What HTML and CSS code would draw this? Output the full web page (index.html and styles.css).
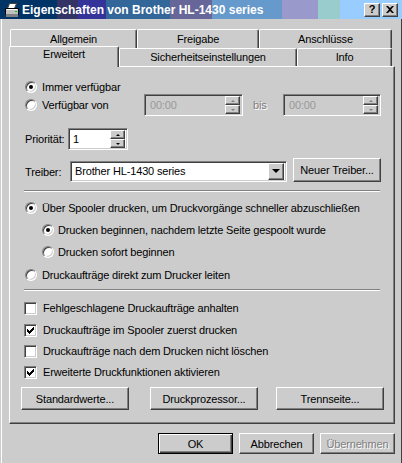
FILE: index.html
```html
<!DOCTYPE html>
<html lang="de">
<head>
    <meta charset="UTF-8">
    <title>Eigenschaften von Brother HL-1430 series</title>
    <link rel="stylesheet" href="styles.css">
</head>
<body>
    <div class="window">
        <div class="titlebar">
            <svg class="app-icon" viewBox="0 0 16 16" width="16" height="16">
                <path d="M5.5 1.5h7l-2 5h-7z" fill="#ffffff" stroke="#404040"/>
                <path d="M1.5 6.5h13v6h-13z" fill="#c0c0c0" stroke="#000000"/>
                <path d="M2 12h12v3H2z" fill="#808080"/>
                <path d="M2.5 7.5h11" stroke="#ffffff"/>
                <rect x="11" y="9" width="2" height="1" fill="#00cc00"/>
            </svg>
            <span class="title">Eigenschaften von Brother HL-1430 series</span>
            <div class="caption-btns">
                <div class="cap-btn help">?</div>
                <div class="cap-btn">
                    <svg viewBox="0 0 8 7" width="8" height="7">
                        <path d="M0 0h2l2 2 2-2h2L5 3.5 8 7H6L4 5 2 7H0l3-3.5z" fill="#000"/>
                    </svg>
                </div>
            </div>
        </div>

        <div class="client">
            <div class="tabs">
                <div class="tabrow back">
                    <div class="tab t-allgemein">Allgemein</div>
                    <div class="tab t-freigabe">Freigabe</div>
                    <div class="tab t-anschluesse">Anschlüsse</div>
                </div>
                <div class="tabrow front">
                    <div class="tab t-erweitert active">Erweitert</div>
                    <div class="tab t-sicherheit">Sicherheitseinstellungen</div>
                    <div class="tab t-info">Info</div>
                </div>
            </div>

            <div class="panel">
                <div class="row r-immer">
                    <span class="radio checked"></span>
                    <span class="label">Immer verfügbar</span>
                </div>
                <div class="row r-von">
                    <div class="von-label">
                        <span class="radio"></span>
                        <span class="label">Verfügbar von</span>
                    </div>
                    <div class="field time disabled">
                        <span class="value">00:00</span>
                        <div class="spin">
                            <div class="spin-btn"><span class="arrow up"></span></div>
                            <div class="spin-btn"><span class="arrow down"></span></div>
                        </div>
                    </div>
                    <span class="bis disabled-text">bis</span>
                    <div class="field time time2 disabled">
                        <span class="value">00:00</span>
                        <div class="spin">
                            <div class="spin-btn"><span class="arrow up"></span></div>
                            <div class="spin-btn"><span class="arrow down"></span></div>
                        </div>
                    </div>
                </div>
                <div class="row r-prio">
                    <span class="field-label prio-label">Priorität:</span>
                    <div class="field prio">
                        <span class="value">1</span>
                        <div class="spin">
                            <div class="spin-btn"><span class="arrow up"></span></div>
                            <div class="spin-btn"><span class="arrow down"></span></div>
                        </div>
                    </div>
                </div>
                <div class="row r-treiber">
                    <span class="field-label treiber-label">Treiber:</span>
                    <div class="field combo">
                        <span class="value">Brother HL-1430 series</span>
                        <div class="drop-btn"><span class="arrow down big"></span></div>
                    </div>
                    <div class="btn neu-treiber">Neuer Treiber...</div>
                </div>

                <div class="sep sep1"></div>

                <div class="row r-spool">
                    <span class="radio checked"></span>
                    <span class="label">Über Spooler drucken, um Druckvorgänge schneller abzuschließen</span>
                </div>
                <div class="row sub r-letzte">
                    <span class="radio checked"></span>
                    <span class="label">Drucken beginnen, nachdem letzte Seite gespoolt wurde</span>
                </div>
                <div class="row sub r-sofort">
                    <span class="radio"></span>
                    <span class="label">Drucken sofort beginnen</span>
                </div>
                <div class="row r-direkt">
                    <span class="radio"></span>
                    <span class="label">Druckaufträge direkt zum Drucker leiten</span>
                </div>

                <div class="sep sep2"></div>

                <div class="row check c1">
                    <span class="checkbox"></span>
                    <span class="label">Fehlgeschlagene Druckaufträge anhalten</span>
                </div>
                <div class="row check c2">
                    <span class="checkbox checked"><svg viewBox="0 0 7 7" width="7" height="7"><path d="M0 2h1v1h1v1h1V3h1V2h1V1h1V0h1v3H6v1H5v1H4v1H3v1H2V6H1V5H0z" fill="#000"/></svg></span>
                    <span class="label">Druckaufträge im Spooler zuerst drucken</span>
                </div>
                <div class="row check c3">
                    <span class="checkbox"></span>
                    <span class="label">Druckaufträge nach dem Drucken nicht löschen</span>
                </div>
                <div class="row check c4">
                    <span class="checkbox checked"><svg viewBox="0 0 7 7" width="7" height="7"><path d="M0 2h1v1h1v1h1V3h1V2h1V1h1V0h1v3H6v1H5v1H4v1H3v1H2V6H1V5H0z" fill="#000"/></svg></span>
                    <span class="label">Erweiterte Druckfunktionen aktivieren</span>
                </div>

                <div class="panel-buttons">
                    <div class="btn b-standard">Standardwerte...</div>
                    <div class="btn b-prozessor">Druckprozessor...</div>
                    <div class="btn b-trenn">Trennseite...</div>
                </div>
            </div>

            <div class="dialog-buttons">
                <div class="btn default">OK</div>
                <div class="btn">Abbrechen</div>
                <div class="btn disabled">Übernehmen</div>
            </div>
        </div>
    </div>
</body>
</html>
```

FILE: styles.css
```css
body {
    margin: 0;
    font-family: "Liberation Sans", Arial, sans-serif;
    font-size: 11px;
    letter-spacing: -0.15px;
    background-color: #cccccc;
    color: #000000;
}

.window {
    width: 402px;
    height: 463px;
    background-color: #cccccc;
    display: flex;
    flex-direction: column;
    overflow: hidden;
}

/* title bar, banded like a 256 colour gradient */
.titlebar {
    flex: none;
    height: 19px;
    display: flex;
    align-items: center;
    background: linear-gradient(to right,
        #003366 0 57px, #333366 57px 78px, #333399 78px 106px,
        #336699 106px 170px, #666699 170px 212px, #6699cc 212px 282px,
        #9999cc 282px 318px, #99cccc 318px 340px, #99ccff 340px);
}

.app-icon {
    margin-left: 4px;
    flex: none;
}

.title {
    margin-left: 2px;
    padding-top: 1px;
    color: #ffffff;
    font-weight: bold;
    font-size: 12px;
    letter-spacing: 0;
    white-space: nowrap;
}

.caption-btns {
    margin-left: auto;
    margin-right: 4px;
    display: flex;
    gap: 2px;
}

.cap-btn {
    box-sizing: border-box;
    width: 16px;
    height: 14px;
    background-color: #cccccc;
    border: 1px solid;
    border-color: #ffffff #404040 #404040 #ffffff;
    box-shadow: inset -1px -1px #808080;
    display: flex;
    align-items: center;
    justify-content: center;
}

.cap-btn.help {
    font-weight: bold;
    font-size: 11px;
    line-height: 11px;
}

.client {
    flex: 1;
    margin-left: 1px;
    border-left: 1px solid #ffffff;
    border-right: 1px solid #404040;
}

/* tabs */
.tabs {
    padding-top: 10px;
}

.tabrow {
    display: flex;
}

.tabrow.back {
    padding-left: 8px;
    height: 19px;
}

.tabrow.front {
    padding-left: 7px;
    height: 18px;
    align-items: flex-end;
}

.tab {
    box-sizing: border-box;
    background-color: #cccccc;
    border-top: 1px solid #ffffff;
    border-left: 1px solid #ffffff;
    border-right: 1px solid #404040;
    box-shadow: inset -1px 0 #808080;
    border-radius: 2px 2px 0 0;
    text-align: center;
    line-height: 13px;
    white-space: nowrap;
}

.back .tab {
    height: 19px;
    padding-top: 3px;
}

.front .tab {
    height: 18px;
    padding-top: 2px;
}

.front .tab.active {
    height: 21px;
    margin-bottom: -1px;
    padding-top: 1px;
    position: relative;
    z-index: 1;
}

.t-allgemein { width: 127px; }
.t-freigabe { width: 122px; }
.t-anschluesse { width: 133px; }
.t-erweitert { width: 110px; }
.t-sicherheit { width: 178px; }
.t-info { width: 95px; }

/* tab page */
.panel {
    box-sizing: border-box;
    margin-left: 7px;
    width: 386px;
    height: 358px;
    border: 1px solid;
    border-color: #ffffff #404040 #404040 #ffffff;
    box-shadow: inset -1px -1px #808080;
    padding: 12px 0 0 14px;
}

.row {
    display: flex;
    align-items: center;
    height: 16px;
    white-space: nowrap;
}

.r-immer { height: 15px; }
.r-von { height: 22px; }
.r-prio { height: 22px; margin-top: 12px; }
.r-treiber { height: 24px; margin-top: 8px; }
.r-spool { margin-top: 8px; }
.r-letzte { margin-top: 6px; }
.r-sofort { margin-top: 6px; }
.r-direkt { margin-top: 7px; }
.c1 { margin-top: 9px; }
.c2 { margin-top: 6px; }
.c3 { margin-top: 5px; }
.c4 { margin-top: 5px; }

.row.sub {
    padding-left: 17px;
}

.sep {
    width: 356px;
    height: 0;
    border-top: 1px solid #808080;
    border-bottom: 1px solid #ffffff;
}

.sep1 { margin-top: 8px; }
.sep2 { margin-top: 6px; }

.radio {
    position: relative;
    flex: none;
    box-sizing: border-box;
    width: 12px;
    height: 12px;
    margin-left: 1px;
    margin-right: 5px;
    border-radius: 50%;
    background-color: #ffffff;
    border: 1px solid;
    border-color: #808080 #ffffff #ffffff #808080;
    box-shadow: inset 1px 1px #404040, inset -1px -1px #cccccc;
}

.radio.checked::after {
    content: "";
    position: absolute;
    left: 3px;
    top: 3px;
    width: 4px;
    height: 4px;
    border-radius: 50%;
    background-color: #000000;
}

.row.sub .radio {
    margin-right: 4px;
}

.checkbox {
    flex: none;
    box-sizing: border-box;
    width: 13px;
    height: 13px;
    margin-right: 6px;
    background-color: #ffffff;
    border: 1px solid;
    border-color: #808080 #ffffff #ffffff #808080;
    box-shadow: inset 1px 1px #404040, inset -1px -1px #cccccc;
    display: flex;
    align-items: center;
    justify-content: center;
}

.checkbox svg {
    margin-top: 1px;
}

.von-label {
    width: 120px;
    display: flex;
    align-items: center;
}

.field {
    position: relative;
    box-sizing: border-box;
    height: 22px;
    background-color: #ffffff;
    border: 1px solid;
    border-color: #808080 #ffffff #ffffff #808080;
    box-shadow: inset 1px 1px #404040, inset -1px -1px #cccccc;
    display: flex;
    align-items: center;
    padding-left: 4px;
}

.field.disabled {
    background-color: #cccccc;
    color: #999999;
}

.time { width: 99px; }
.time .value { padding-left: 1px; }
.time2 { width: 98px; }

.bis {
    margin-left: 10px;
    width: 30px;
}

.disabled-text {
    color: #808080;
    text-shadow: 1px 1px #ffffff;
}

.spin {
    margin-left: auto;
    margin-right: 2px;
    width: 15px;
    display: flex;
    flex-direction: column;
}

.spin-btn {
    box-sizing: border-box;
    height: 9px;
    background-color: #cccccc;
    border: 1px solid;
    border-color: #ffffff #404040 #404040 #ffffff;
    box-shadow: inset -1px -1px #808080;
    display: flex;
    align-items: center;
    justify-content: center;
}

.arrow {
    width: 0;
    height: 0;
    border-left: 2px solid transparent;
    border-right: 2px solid transparent;
}

.arrow.up { border-bottom: 2px solid #000000; }
.arrow.down { border-top: 2px solid #000000; }

.disabled .arrow.up { border-bottom-color: #808080; }
.disabled .arrow.down { border-top-color: #808080; }

.arrow.big {
    border-left-width: 4px;
    border-right-width: 4px;
    border-top-width: 4px;
}

.field-label {
    margin-left: 1px;
}

.prio-label { width: 43px; }
.treiber-label { width: 45px; padding-top: 3px; }

.prio {
    width: 60px;
    padding-left: 4px;
}

.combo {
    width: 217px;
    height: 21px;
    margin-top: 2px;
    padding-left: 4px;
}

.drop-btn {
    box-sizing: border-box;
    margin-left: auto;
    margin-right: 2px;
    width: 16px;
    height: 17px;
    background-color: #cccccc;
    border: 1px solid;
    border-color: #ffffff #404040 #404040 #ffffff;
    box-shadow: inset -1px -1px #808080;
    display: flex;
    align-items: center;
    justify-content: center;
}

/* push buttons */
.btn {
    box-sizing: border-box;
    background-color: #cccccc;
    border: 1px solid;
    border-color: #ffffff #404040 #404040 #ffffff;
    box-shadow: inset -1px -1px #808080;
    display: flex;
    align-items: center;
    justify-content: center;
    white-space: nowrap;
}

.neu-treiber {
    width: 88px;
    height: 24px;
    margin-left: 6px;
}

.panel-buttons {
    display: flex;
    margin-top: 7px;
    margin-left: -3px;
}

.panel-buttons .btn {
    width: 108px;
    height: 23px;
}

.b-prozessor { margin-left: 21px; }
.b-trenn { margin-left: 18px; }

.dialog-buttons {
    display: flex;
    justify-content: flex-end;
    gap: 6px;
    margin-top: 9px;
    padding-right: 6px;
}

.dialog-buttons .btn {
    width: 75px;
    height: 21px;
}

.btn.default {
    border-color: #000000;
    box-shadow: inset 1px 1px #ffffff, inset -1px -1px #404040, inset -2px -2px #808080;
}

.btn.disabled {
    color: #808080;
    text-shadow: 1px 1px #ffffff;
}
```
